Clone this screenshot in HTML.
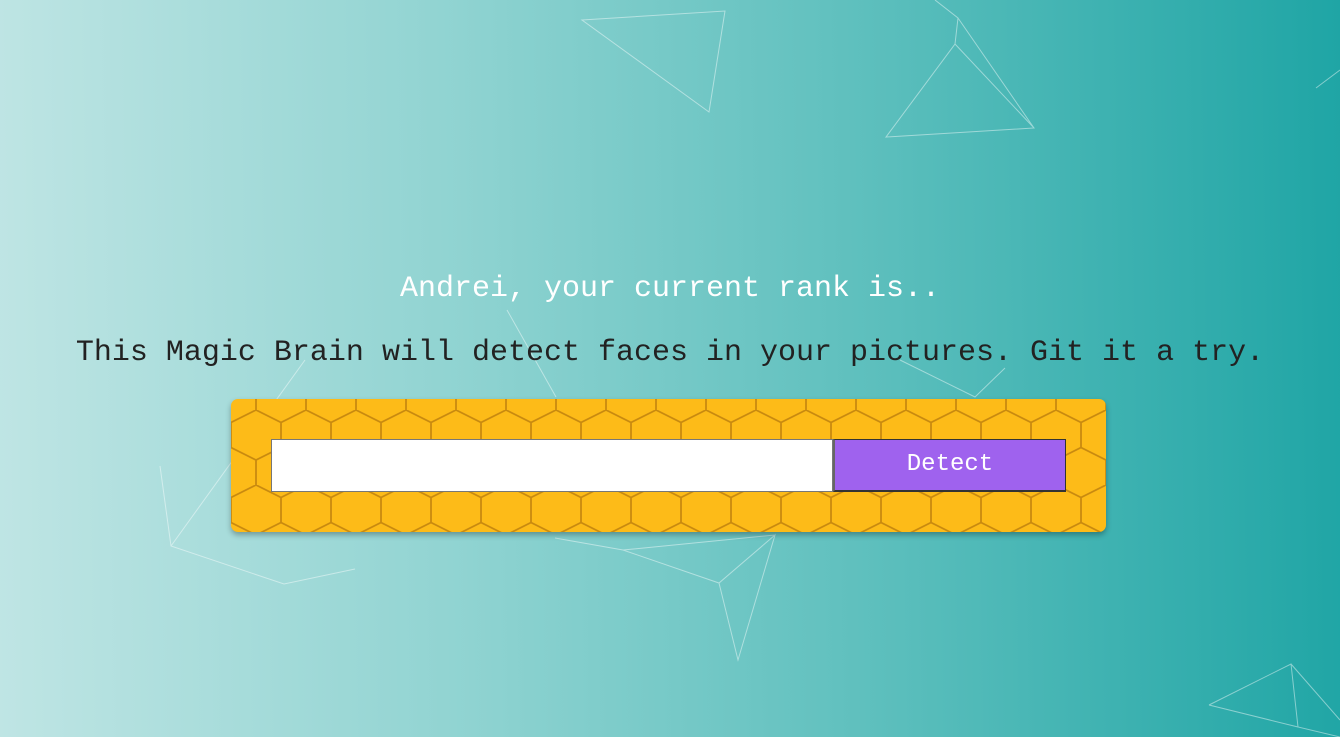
<!DOCTYPE html>
<html><head><style>
html,body{margin:0;padding:0}
body{width:1340px;height:737px;overflow:hidden;position:relative;background:linear-gradient(89deg,#bfe5e4 0%,#8fd3d1 35%,#5dbfbd 65%,#1fa5a5 100%);font-family:"Courier New","Liberation Mono",monospace}
.t{position:absolute;left:0;width:1340px;text-align:center;font-size:30px;white-space:pre}
</style></head><body>
<svg width="1340" height="737" style="position:absolute;left:0;top:0" stroke="rgba(255,255,255,0.45)" stroke-width="1" fill="none">
<path d="M582 20 L725 11 L709 112 Z M935 0 L958 18 L955 44 L886 137 L1034 128 L955 44 M958 18 L1034 128"/>
<path d="M160 466 L171 546 L284 584 L355 569 M171 546 L305 360"/>
<path d="M555 538 L623 550 L719 583 L775 535 L738 660 L719 583 M623 550 L775 535"/>
<path d="M507 310 L556 397 M900 360 L975 397 L1005 368"/>
<path d="M1209 705 L1291 664 L1298 727 L1340 737 M1209 705 L1298 727 M1291 664 L1340 720 M1316 88 L1340 70"/>
</svg>
<div class="t" style="top:272px;color:#fff">Andrei, your current rank is..</div>
<div class="t" style="top:336px;color:#222">This Magic Brain will detect faces in your pictures. Git it a try.</div>
<div style="position:absolute;left:231px;top:399px;width:875px;height:133px;border-radius:7px;overflow:hidden;box-shadow:0 3px 6px rgba(0,0,0,0.3);background:#fdbb18">
<svg width="875" height="133" style="position:absolute;left:0;top:0">
<defs><pattern id="h" width="50" height="75" patternUnits="userSpaceOnUse" patternTransform="translate(0,11)">
<path d="M25 0 L50 12.5 L50 37.5 L25 50 L0 37.5 L0 12.5 Z M25 50 L25 75" fill="none" stroke="#c98a10" stroke-width="1.8"/>
</pattern></defs>
<rect width="875" height="133" fill="url(#h)"/>
</svg>
<div style="position:absolute;left:40px;top:40px;width:560px;height:51px;background:#fff;border:1px solid #777"></div>
<div style="position:absolute;left:602px;top:40px;width:230px;height:50px;background:#9f62ee;border:1px solid #333;border-left:2px solid #666;border-bottom-width:2px;color:#fff;font-size:24px;text-align:center;line-height:50px">Detect</div>
</div>
</body></html>
